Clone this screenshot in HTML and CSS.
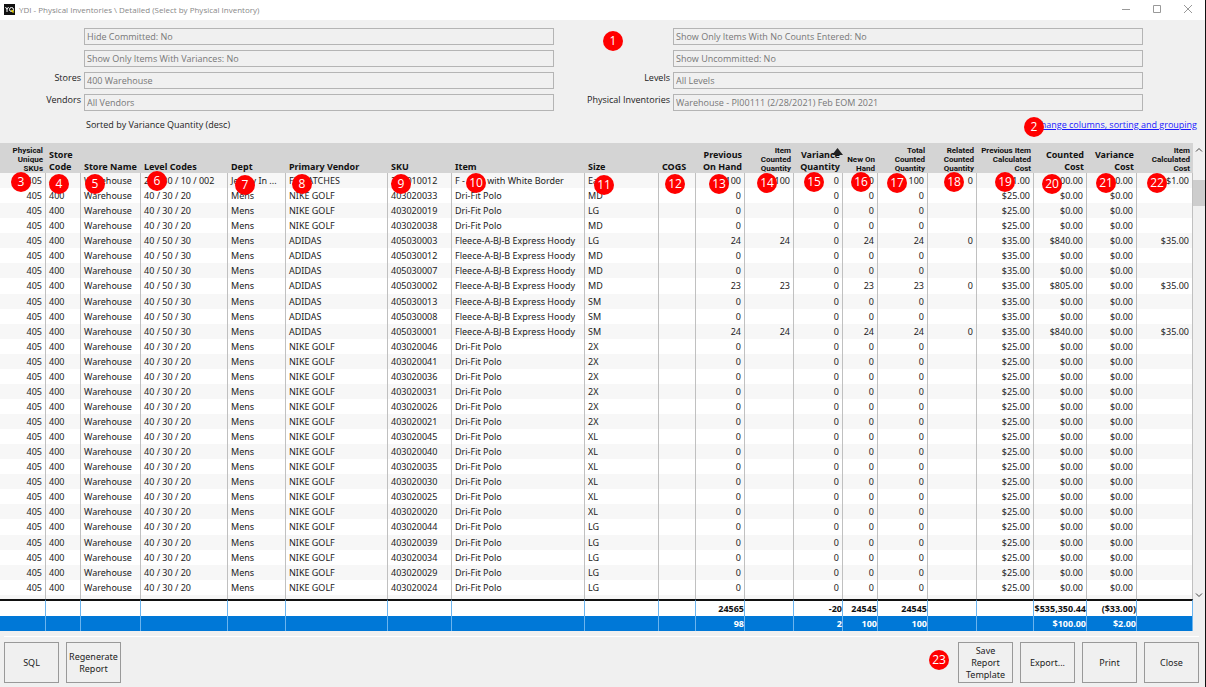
FILE: index.html
```html
<!DOCTYPE html>
<html lang="en">
<head>
  <meta charset="UTF-8" />
  <meta name="viewport" content="width=device-width, initial-scale=1" />
  <title>YDI - Physical Inventories</title>
  <link rel="stylesheet" href="styles.css">
</head>
<body>
  <div class="window">
    <header class="titlebar">
      <svg class="logo" viewBox="0 0 22 22" aria-hidden="true">
        <rect width="22" height="22" fill="#111" />
        <path d="M3 6l3 5v5M9 6l-3 5" fill="none" stroke="#fff" stroke-width="2" />
        <circle cx="15" cy="11" r="4" fill="none" stroke="#fff" stroke-width="2" />
        <path d="M15 12l4 5" stroke="#e8d400" stroke-width="3" />
      </svg>
      <h1 class="title">YDI - Physical Inventories \ Detailed (Select by Physical Inventory)</h1>
      <div class="window-controls">
        <button type="button" aria-label="Minimize"><svg viewBox="0 0 10 10"><path d="M1 5.500h8" /></svg></button>
        <button type="button" aria-label="Maximize"><svg viewBox="0 0 10 10"><path d="M1.500 1.500h7v7h-7z" /></svg></button>
        <button type="button" aria-label="Close window"><svg viewBox="0 0 10 10"><path d="M1 1l8 8M9 1l-8 8" /></svg></button>
      </div>
    </header>

    <section class="filters">
      <input class="field left" type="text" aria-label="Committed filter" value="Hide Committed: No" readonly />
      <input class="field right" type="text" aria-label="Counts filter" value="Show Only Items With No Counts Entered: No" readonly />

      <input class="field left" type="text" aria-label="Variances filter" value="Show Only Items With Variances: No" readonly />
      <input class="field right" type="text" aria-label="Uncommitted filter" value="Show Uncommitted: No" readonly />

      <label class="left-label" for="stores">Stores</label>
      <input class="field left" type="text" id="stores" value="400 Warehouse" readonly />
      <label class="right-label" for="levels">Levels</label>
      <input class="field right" type="text" id="levels" value="All Levels" readonly />

      <label class="left-label" for="vendors">Vendors</label>
      <input class="field left" type="text" id="vendors" value="All Vendors" readonly />
      <label class="right-label" for="inventories">Physical Inventories</label>
      <input class="field right" type="text" id="inventories" value="Warehouse - PI00111 (2/28/2021) Feb EOM 2021" readonly />
    </section>

    <div class="sort-bar">
      <span>Sorted by Variance Quantity (desc)</span>
      <a href="#columns">change columns, sorting and grouping</a>
    </div>

    <main class="report">
      <table class="grid">
        <thead>
          <tr id="head-row"></tr>
        </thead>
        <tbody id="rows"></tbody>
        <tfoot id="totals"></tfoot>
      </table>
      <div class="scrollbar" aria-hidden="true">
        <svg viewBox="0 0 8 8"><path d="M1 5.500l3-3 3 3" /></svg>
        <div class="track"><div class="thumb"></div></div>
        <svg viewBox="0 0 8 8"><path d="M1 2.500l3 3 3-3" /></svg>
      </div>
    </main>

    <footer class="actions">
      <button type="button">SQL</button>
      <button type="button">Regenerate Report</button>
      <button type="button" class="push">Save Report Template</button>
      <button type="button">Export...</button>
      <button type="button">Print</button>
      <button type="button">Close</button>
    </footer>

    <div id="pins"></div>
  </div>

  <script src="script.js"></script>
</body>
</html>
```
FILE: styles.css
```css
* {
  box-sizing: border-box;
}
body {
  margin: 0;
  font-family: "Noto Sans", "Open Sans", sans-serif;
  font-size: 9px;
  color: #222;
  background: #f0f0f0;
}
button, input {
  font: inherit;
  color: inherit;
}
.window {
  position: relative;
  display: flex;
  flex-direction: column;
  min-height: 100vh;
  border-right: 1px solid #111;
}

/* Title bar */
.titlebar {
  display: flex;
  align-items: center;
  height: 20px;
  padding: 0 2px 2px 4px;
  background: #fff;
  color: #888;
}
.logo {
  width: 11px;
  height: 11px;
  margin-right: 4px;
}
.title {
  margin: 0;
  font-family: "Open Sans", sans-serif;
  font-size: 8px;
  font-weight: normal;
}
.window-controls {
  display: flex;
  margin-left: auto;
}
.window-controls button {
  display: flex;
  align-items: center;
  justify-content: center;
  width: 31px;
  height: 18px;
  padding: 0;
  border: none;
  background: none;
}
.window-controls svg {
  width: 10px;
  height: 10px;
  fill: none;
  stroke: #999;
}

/* Filters */
.filters {
  display: grid;
  grid-template-columns: 84px 1fr 119px 1fr 62px;
  row-gap: 5px;
  padding-top: 8px;
  font-family: "Open Sans", sans-serif;
}
.filters label {
  padding-right: 3px;
  line-height: 12px;
  text-align: right;
}
.field {
  width: 100%;
  height: 17px;
  padding: 0 2px;
  border: 1px solid #b4b4b4;
  background: #f0f0f0;
  color: #777;
}
.left-label {
  grid-column: 1;
}
.left {
  grid-column: 2;
}
.right-label {
  grid-column: 3;
}
.right {
  grid-column: 4;
}
.sort-bar {
  display: flex;
  justify-content: space-between;
  height: 32px;
  padding: 7px 8px 0 86px;
  font-family: "Open Sans", sans-serif;
  line-height: 13px;
}
.sort-bar a {
  color: #1a1aff;
}

/* Report grid */
.report {
  display: flex;
  flex: 1;
}
.grid {
  flex: 1;
  width: 100%;
  min-width: 0;
  table-layout: fixed;
  border-collapse: separate;
  border-spacing: 0;
  background: #fff;
}
.grid th,
.grid td {
  padding: 0 3px;
  line-height: 15px;
  text-align: left;
  white-space: nowrap;
}
.grid .num {
  text-align: right;
}
.grid thead th {
  position: relative;
  height: 30px;
  background: #d4d4d4;
  color: #111;
  line-height: 12px;
  vertical-align: bottom;
  white-space: pre;
}
.grid thead .small {
  font-family: Roboto, sans-serif;
  font-size: 8px;
  line-height: 9px;
}
.sort-arrow {
  position: absolute;
  top: 5px;
  right: 0;
  width: 11px;
  height: 7px;
}
.grid tbody td {
  border-right: 1px solid #c0c0c0;
}
.grid tbody tr:nth-child(odd) {
  background: #f7f7f7;
}
.grid tbody .partial td {
  height: 4px;
}
.grid tfoot td {
  height: 15px;
  padding: 0;
  border-right: 1px solid #6cb4ee;
  color: #111;
  font-weight: bold;
}
.grid tfoot tr:first-child td {
  height: 17px;
  border-top: 2px solid #111;
}
.grid tfoot .selected td {
  background: #0078d7;
  color: #fff;
}

/* Scrollbar beside the grid */
.scrollbar {
  display: flex;
  flex: none;
  flex-direction: column;
  align-items: center;
  width: 12px;
  padding: 3px 0 32px;
}
.scrollbar svg {
  width: 8px;
  height: 8px;
  fill: none;
  stroke: #444;
}
.track {
  flex: 1;
  width: 100%;
  padding-top: 26px;
}
.thumb {
  height: 26px;
  background: #cdcdcd;
}

/* Bottom buttons */
.actions {
  display: flex;
  gap: 7px;
  margin: 5px 6px 4px 4px;
  padding-top: 5px;
  border-top: 1px solid #fff;
}
.actions button {
  width: 55px;
  height: 41px;
  padding: 0 2px;
  border: 1px solid #999;
  background: #f0f0f0;
  line-height: 12px;
}
.push {
  margin-left: auto;
}

/* Numbered callouts */
.pin {
  position: absolute;
  width: 20px;
  height: 20px;
  margin: -10px 0 0 -10px;
  border-radius: 50%;
  background: #f00;
  color: #fff;
  font-family: "Open Sans", sans-serif;
  font-size: 12px;
  line-height: 20px;
  text-align: center;
}
```
FILE: script.js
```js
const columns = [
  { name: "Physical\nUnique\nSKUs", width: 46, num: true, small: true },
  { name: "Store\nCode", width: 35 },
  { name: "Store Name", width: 60 },
  { name: "Level Codes", width: 87 },
  { name: "Dept", width: 58 },
  { name: "Primary Vendor", width: 102 },
  { name: "SKU", width: 64 },
  { name: "Item", width: 133 },
  { name: "Size", width: 74 },
  { name: "COGS", width: 37 },
  { name: "Previous\nOn Hand", width: 49, num: true },
  { name: "Item\nCounted\nQuantity", width: 49, num: true, small: true },
  { name: "Variance\nQuantity", width: 49, num: true, sorted: true },
  { name: "New On\nHand", width: 35, num: true, small: true },
  { name: "Total\nCounted\nQuantity", width: 50, num: true, small: true },
  { name: "Related\nCounted\nQuantity", width: 49, num: true, small: true },
  { name: "Previous Item\nCalculated\nCost", width: 57, num: true, small: true },
  { name: "Counted\nCost", width: 53, num: true },
  { name: "Variance\nCost", width: 50, num: true },
  { name: "Item\nCalculated\nCost", width: 56, num: true, small: true },
];

// SKU, size and counted quantity (blank when nothing was counted)
const items = [
  ["403020033", "MD"], ["403020019", "LG"], ["403020038", "MD"],
  ["405030003", "LG", 24], ["405030012", "MD"], ["405030007", "MD"],
  ["405030002", "MD", 23], ["405030013", "SM"], ["405030008", "SM"],
  ["405030001", "SM", 24], ["403020046", "2X"], ["403020041", "2X"],
  ["403020036", "2X"], ["403020031", "2X"], ["403020026", "2X"],
  ["403020021", "2X"], ["403020045", "XL"], ["403020040", "XL"],
  ["403020035", "XL"], ["403020030", "XL"], ["403020025", "XL"],
  ["403020020", "XL"], ["403020044", "LG"], ["403020039", "LG"],
  ["403020034", "LG"], ["403020029", "LG"], ["403020024", "LG"],
];

const rows = [
  ["405", "400", "Warehouse", "20 / 30 / 10 / 002", "Jersey In ...", "FD PATCHES",
    "200010012", "F - Flag with White Border", "Each", "", "100", "100", "0", "100",
    "100", "0", "$1.00", "$100.00", "$0.00", "$1.00"],
];

items.forEach(([sku, size, count]) => {
  const hoody = sku.startsWith("405");
  const price = hoody ? 35 : 25;
  const qty = count || 0;
  rows.push([
    "405", "400", "Warehouse",
    hoody ? "40 / 50 / 30" : "40 / 30 / 20",
    "Mens",
    hoody ? "ADIDAS" : "NIKE GOLF",
    sku,
    hoody ? "Fleece-A-BJ-B Express Hoody" : "Dri-Fit Polo",
    size, "", qty, count || "", "0", qty, qty,
    count ? "0" : "",
    `$${price.toFixed(2)}`,
    `$${(price * qty).toFixed(2)}`,
    "$0.00",
    count ? `$${price.toFixed(2)}` : "",
  ]);
});

// Totals by column index
const totals = { 10: "24565", 12: "-20", 13: "24545", 14: "24545", 17: "$535,350.44", 18: "($33.00)" };
const selected = { 10: "98", 12: "2", 13: "100", 14: "100", 17: "$100.00", 18: "$2.00" };

// Callout number and the centre of its circle
const pins = [
  [1, 613, 41], [2, 1034, 127], [3, 21, 182], [4, 59, 184], [5, 95, 184],
  [6, 157, 181], [7, 245, 185], [8, 302, 184], [9, 401, 184], [10, 476, 183],
  [11, 604, 185], [12, 675, 184], [13, 719, 184], [14, 767, 183], [15, 814, 182],
  [16, 861, 182], [17, 897, 183], [18, 954, 182], [19, 1005, 182], [20, 1052, 184],
  [21, 1106, 183], [22, 1157, 183], [23, 939, 660],
];

const arrow = '<svg class="sort-arrow" viewBox="0 0 11 7"><path d="M0 7L5.500 0 11 7z" fill="#222" /></svg>';

document.getElementById("head-row").innerHTML = columns.map(c => `
  <th scope="col" class="${c.num ? "num" : ""} ${c.small ? "small" : ""}" style="width:${c.width}px">${c.name}${c.sorted ? arrow : ""}</th>
`).join("");

function renderCells(getValue) {
  return columns.map((c, i) => `<td class="${c.num ? "num" : ""}">${getValue(i)}</td>`).join("");
}

document.getElementById("rows").innerHTML =
  rows.map(row => `<tr>${renderCells(i => row[i])}</tr>`).join("") +
  `<tr class="partial">${renderCells(() => "")}</tr>`;

document.getElementById("totals").innerHTML =
  `<tr>${renderCells(i => totals[i] || "")}</tr>` +
  `<tr class="selected">${renderCells(i => selected[i] || "")}</tr>`;

document.getElementById("pins").innerHTML = pins.map(([n, x, y]) =>
  `<span class="pin" style="left:${x}px;top:${y}px">${n}</span>`
).join("");
```
